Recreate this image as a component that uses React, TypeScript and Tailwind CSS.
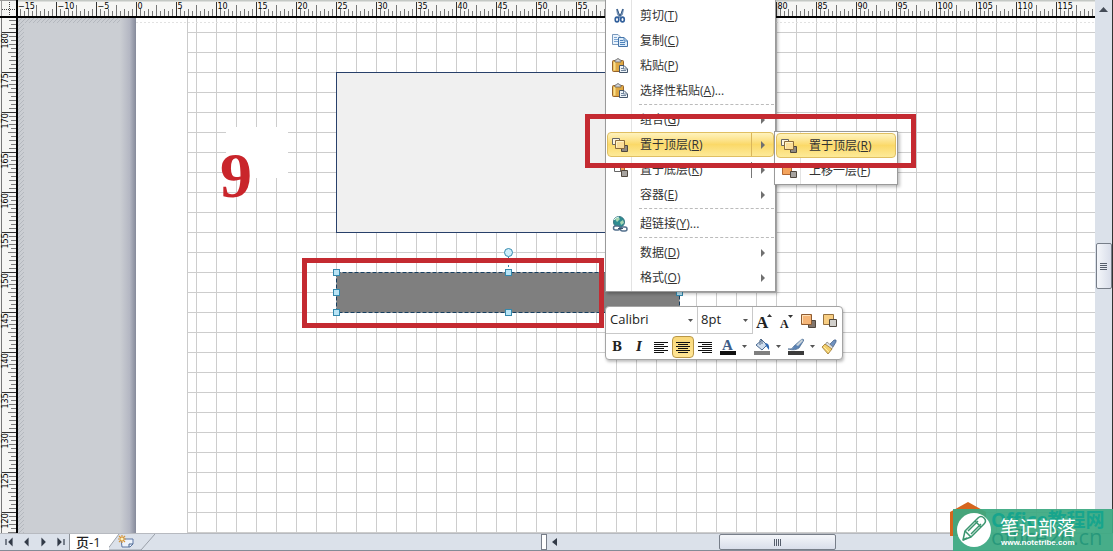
import type { ReactNode } from 'react';

const FONT = 'font-["Open_Sans","Noto_Sans_CJK_SC",sans-serif]';

function TopRuler() {
  const ticks: ReactNode[] = [];
  for (let i = 0; i <= 268; i++) {
    const x = 2.5 + i * 4;
    const k = i - 29;
    const major = ((k % 10) + 10) % 10 === 0;
    const mid = ((k % 5) + 5) % 5 === 0;
    ticks.push(<path key={i} d={`M${x} ${major ? 2 : mid ? 5 : i % 2 ? 11 : 9}V17`} stroke={major ? '#333' : '#777'} />);
    if (major) {
      ticks.push(
        <text key={'t' + i} x={x + 1} y={9} fontSize="8" fill="#000">
          {String((k / 10) * 5).replace('-', '−')}
        </text>,
      );
    }
  }
  return (
    <svg className='block h-[18px] min-w-0 flex-1 border-b-2 border-black bg-[#f6f6f4] font-["DejaVu_Sans",sans-serif]' aria-label="Horizontal ruler">
      <path d="M0 .5H1200" stroke="#c4c8c4" strokeWidth="2" />
      <text x="0" y="9" fontSize="8" fill="#000">−15</text>
      {ticks}
    </svg>
  );
}

function SideRuler() {
  const ticks: ReactNode[] = [];
  for (let i = 0; i < 130; i++) {
    const y = 2.5 + i * 4;
    const k = i - 3;
    const major = ((k % 10) + 10) % 10 === 0;
    const mid = ((k % 5) + 5) % 5 === 0;
    ticks.push(<path key={i} d={`M${major ? 2 : mid ? 8 : i % 2 ? 11 : 9} ${y}H17`} stroke={major ? '#333' : '#777'} />);
    if (major) {
      ticks.push(
        <text key={'t' + i} transform={`translate(8 ${y + 16}) rotate(-90)`} fontSize="8" fill="#000">
          {180 - (k / 10) * 5}
        </text>,
      );
    }
  }
  return (
    <svg className='block h-full w-[18px] shrink-0 border-r-2 border-black bg-[#f6f6f4] font-["DejaVu_Sans",sans-serif]' aria-label="Vertical ruler">
      <path d="M1.5 0V600" stroke="#777" />
      {ticks}
    </svg>
  );
}

function Grid() {
  return (
    <svg className="absolute inset-0 h-full w-full" aria-hidden="true">
      <defs>
        <pattern id="grid" width="20" height="20" x="18" y="13" patternUnits="userSpaceOnUse">
          <path d="M.5 0V20M0 1.5H20" stroke="#cdcdcd" />
        </pattern>
        <pattern id="hatch" width="4" height="4" patternUnits="userSpaceOnUse">
          <path d="M0 4L4 0" stroke="#aeb3b9" strokeWidth=".8" />
        </pattern>
        <linearGradient id="shade">
          <stop offset="0" stopColor="#cbced3" />
          <stop offset=".6" stopColor="#b4b7c3" />
          <stop offset="1" stopColor="#858a9a" />
        </linearGradient>
      </defs>
      <rect width="118" height="100%" fill="#cbced3" />
      <rect width="6" height="100%" fill="url(#hatch)" />
      <rect width="118" height="5" fill="url(#hatch)" />
      <rect x="102" width="16" height="100%" fill="url(#shade)" />
      <rect x="118" width="100%" height="100%" fill="#fff" />
      <rect x="169" width="100%" height="100%" fill="url(#grid)" />
      <path d="M169.500 0V600" stroke="#cbcbcb" />
      <path d="M118 4.500H1200" stroke="#e2e2e2" strokeDasharray="2 2" />
      <rect x="208" y="109" width="62" height="51" fill="#fff" />
    </svg>
  );
}

function Shapes() {
  const handles = [[318, 254], [490, 254], [661, 274], [318, 274], [318, 294], [490, 294]];
  return (
    <svg className="absolute inset-0 h-full w-full" aria-hidden="true">
      <rect x="318.500" y="54.500" width="344" height="160" fill="#f0f0f0" stroke="#28406a" />
      <rect x="318.500" y="254.500" width="343" height="40" fill="#7f7f7f" stroke="#173f60" strokeDasharray="4 2" />
      <path d="M490.500 239V252" stroke="#3489ad" strokeDasharray="2 2" />
      <circle cx="490.500" cy="234.500" r="4" fill="#cdeefb" stroke="#3489ad" />
      {handles.map(([x, y]) => (
        <rect key={`${x}-${y}`} x={x - 2.5} y={y - 2.5} width="6" height="6" fill="#b9e4f5" stroke="#3489ad" />
      ))}
    </svg>
  );
}

type IconName = 'cut' | 'copy' | 'paste' | 'front' | 'back' | 'forward' | 'link';

function Icon({ name }: { name: IconName }) {
  return (
    <svg className="h-4 w-4 shrink-0" viewBox="0 0 16 16" fill="none" aria-hidden="true">
      {name === 'cut' && (
        <>
          <path d="M5 1L6 6L9 10M11 1L10 6L6 10" stroke="#7893b5" strokeWidth="2" />
          <path d="M5 1L8 8M11 1L8 8" stroke="#345a86" />
          <ellipse cx="5" cy="11.500" rx="1.800" ry="2.400" stroke="#315f9b" strokeWidth="1.600" />
          <ellipse cx="10.500" cy="11.500" rx="1.800" ry="2.400" stroke="#315f9b" strokeWidth="1.600" />
        </>
      )}
      {name === 'copy' && (
        <>
          <path d="M.5 1.500H6L8.500 4V11.500H.5Z" fill="#eaf3fc" stroke="#7999bd" />
          <path d="M2 4.500H5M2 6.500H6M2 8.500H6" stroke="#7da6d3" />
          <path d="M6.500 4.500H12L15.500 8V13.500H6.500Z" fill="#dcecfa" stroke="#4674a8" />
          <path d="M12 4.500V8H15.500M8 7.500H11M8 9.500H13M8 11.500H13" stroke="#4d82bb" />
        </>
      )}
      {name === 'paste' && (
        <>
          <rect x=".5" y="2.500" width="11" height="11" rx="1" fill="#dfa944" stroke="#96632a" />
          <path d="M2.500 4V12.500" stroke="#fae08d" strokeWidth="2" />
          <path d="M3 4V2H4.500L5 .8H7L7.500 2H9V4Z" fill="#d8dadd" stroke="#666" strokeWidth=".8" />
          <path d="M7.500 7.500H12L15.500 11V14.500H7.500Z" fill="#edf3f8" stroke="#45566b" />
          <path d="M9 10.500H12M9 12.500H14M11.500 8V11H15" stroke="#70849c" />
        </>
      )}
      {name === 'front' && (
        <>
          <path d="M.5 1.500H7.500V7.500H.5Z" fill="#fdf6e2" stroke="#666" />
          <path d="M9.500 8.500H15.500V14.500H9.500Z" fill="#8e8982" stroke="#50483f" />
          <path d="M3.500 3.500H12.500V11.500H3.500Z" fill="#fadd98" stroke="#8a6a3c" />
          <path d="M4.500 10.500V4.500H11.500" stroke="#fff4c8" />
        </>
      )}
      {(name === 'back' || name === 'forward') && (
        <>
          <path d={name === 'back' ? 'M5.500 2.500H12.500V9.500H5.500Z' : 'M1.500 2.500H10.500V11.500H1.500Z'} fill="#f4a35c" stroke="#b16631" />
          {name === 'back' && <path d="M2.500 3.500H8.500V9.500H2.500Z" fill="#fff" stroke="#666" />}
          <path d="M9.500 8.500H15.500V14.500H9.500Z" fill="#a7a39f" stroke="#50483f" />
        </>
      )}
      {name === 'link' && (
        <>
          <circle cx="7" cy="6" r="5.500" fill="#2e8c91" stroke="#397581" />
          <path d="M3 3L6 1L8 3L5 6ZM8 6L11 4L12 7L9 9Z" fill="#a6d6b2" />
          <path d="M2 4Q4 1 7 1" stroke="#d6f4ee" />
          <rect x="1.500" y="10" width="6.500" height="4" rx="2" fill="#fff" stroke="#526f8c" strokeWidth="1.500" />
          <rect x="8.500" y="11" width="6.500" height="4" rx="2" fill="#fff" stroke="#526f8c" strokeWidth="1.500" />
          <path d="M6 12.500H11" stroke="#38546f" />
        </>
      )}
    </svg>
  );
}

interface ItemProps {
  label: string;
  hotkey: string;
  tail?: string;
  icon?: IconName;
  arrow?: boolean;
  split?: boolean;
  active?: boolean;
}

function MenuItem({ label, hotkey, tail = '', icon, arrow, split, active }: ItemProps) {
  return (
    <button
      type="button"
      role="menuitem"
      className={`flex h-[25px] w-full shrink-0 items-center rounded-sm border pl-1 text-left text-[12px] leading-4 whitespace-nowrap text-[#333] ${active ? 'border-[#e0bf62] bg-linear-to-b from-[#fff3bd] via-[#fbd968] to-[#fdea98]' : 'border-transparent'}`}
    >
      <span className="flex w-7 shrink-0">{icon && <Icon name={icon} />}</span>
      <span className="flex-1">
        {label}(<u>{hotkey}</u>){tail}
      </span>
      {arrow && (
        <span className={`flex w-[22px] items-center border-l pl-2 ${active ? 'h-full border-[#d9b65c]' : split ? 'h-4 border-[#777]' : 'h-full border-transparent'}`}>
          <svg className="h-2 w-2" viewBox="0 0 8 8" aria-hidden="true">
            <path d="M1 0L5 4L1 8Z" fill="#707070" />
          </svg>
        </span>
      )}
    </button>
  );
}

function Divider() {
  return <div className="mt-px mb-[2px] ml-8 h-0 border-t border-dashed border-[#bbb]" />;
}

function ContextMenu() {
  return (
    <div role="menu" className="absolute -top-[18px] left-[587px] w-[171px] overflow-hidden border border-t-0 border-[#9a9a9a] bg-white px-px pt-[3px] pb-px shadow-[2px_2px_3px_rgba(0,0,0,0.25)]">
      <div className="absolute inset-y-0 left-[25px] w-px bg-[#e3e3e3]" />
      <div className="relative flex flex-col">
        <MenuItem label="剪切" hotkey="T" icon="cut" />
        <MenuItem label="复制" hotkey="C" icon="copy" />
        <MenuItem label="粘贴" hotkey="P" icon="paste" />
        <MenuItem label="选择性粘贴" hotkey="A" tail="..." icon="paste" />
        <Divider />
        <MenuItem label="组合" hotkey="G" arrow />
        <MenuItem label="置于顶层" hotkey="R" icon="front" arrow active />
        <MenuItem label="置于底层" hotkey="K" icon="back" arrow split />
        <MenuItem label="容器" hotkey="E" arrow />
        <Divider />
        <MenuItem label="超链接" hotkey="Y" tail="..." icon="link" />
        <Divider />
        <MenuItem label="数据" hotkey="D" arrow />
        <MenuItem label="格式" hotkey="O" arrow />
      </div>
    </div>
  );
}

function SubMenu() {
  return (
    <div role="menu" className="absolute top-[113px] left-[756px] w-[124px] border border-[#9a9a9a] bg-white p-px shadow-[2px_2px_3px_rgba(0,0,0,0.25)]">
      <div className="absolute inset-y-0 left-[25px] w-px bg-[#e3e3e3]" />
      <div className="relative">
        <MenuItem label="置于顶层" hotkey="R" icon="front" active />
        <MenuItem label="上移一层" hotkey="F" icon="forward" />
      </div>
    </div>
  );
}

function Caret() {
  return (
    <svg className="h-[3px] w-[5px] shrink-0" viewBox="0 0 5 3" aria-hidden="true">
      <path d="M0 0H5L2.500 3Z" fill="#555" />
    </svg>
  );
}

function Lines({ d }: { d: string }) {
  return (
    <svg className="h-4 w-4" viewBox="0 0 16 16" aria-hidden="true">
      <path d={d} stroke="#111" />
    </svg>
  );
}

function MiniToolbar() {
  const btn = 'flex h-[22px] w-[22px] shrink-0 items-center justify-center';
  return (
    <div role="toolbar" aria-label="Format" className="absolute top-[288px] left-[587px] w-[238px] rounded-sm border border-[#a5a5a5] bg-white text-[#222] shadow-[1px_2px_3px_rgba(0,0,0,0.25)]">
      <div className="flex h-[27px] items-center">
        <div className="relative flex h-full w-[92px] items-center border-r border-b border-[#c9c9c9]">
          <select aria-label="Font" className="h-full w-full appearance-none bg-transparent pl-1 text-[13px]">
            <option>Calibri</option>
          </select>
          <span className="pointer-events-none absolute right-[4px]"><Caret /></span>
        </div>
        <div className="relative flex h-full w-[55px] items-center border-r border-b border-[#c9c9c9]">
          <select aria-label="Size" className="h-full w-full appearance-none bg-transparent pl-[3px] text-[13px]">
            <option>8pt</option>
          </select>
          <span className="pointer-events-none absolute right-[4px]"><Caret /></span>
        </div>
        <button type="button" aria-label="Grow font" className={btn}>
          <svg className="h-4 w-4" viewBox="0 0 16 16"><text x="0" y="15" fontSize="17" fontWeight="bold" className='font-["Liberation_Serif",serif]' fill="#222">A</text><path d="M11 4L13.500 1L16 4Z" fill="#333" /></svg>
        </button>
        <button type="button" aria-label="Shrink font" className={btn}>
          <svg className="h-4 w-4" viewBox="0 0 16 16"><text x="2" y="15" fontSize="12" fontWeight="bold" className='font-["Liberation_Serif",serif]' fill="#222">A</text><path d="M10 2L12.500 5L15 2Z" fill="#333" /></svg>
        </button>
        <button type="button" aria-label="Bring forward" className={btn}>
          <svg className="h-4 w-4" viewBox="0 0 16 16"><path d="M8.500 7.500H15.500V14.500H8.500Z" fill="#80756d" stroke="#50483f" /><path d="M1.500 1.500H11.500V11.500H1.500Z" fill="#f5b577" stroke="#8e5c32" /><path d="M2.500 10V2.500H10" fill="none" stroke="#ffe1b8" /></svg>
        </button>
        <button type="button" aria-label="Send backward" className={btn}>
          <svg className="h-4 w-4" viewBox="0 0 16 16"><path d="M1.500 1.500H11.500V11.500H1.500Z" fill="#f8ce83" stroke="#957140" /><path d="M7.500 6.500H14.500V13.500H7.500Z" fill="#d1cfcb" stroke="#50483f" /></svg>
        </button>
      </div>
      <div className="flex h-[25px] items-center">
        <button type="button" className={`${btn} font-["DejaVu_Serif",serif] text-[12px] font-bold`}>B</button>
        <button type="button" className={`${btn} font-["DejaVu_Serif",serif] text-[12px] font-bold italic`}>I</button>
        <button type="button" aria-label="Align left" className={btn}><Lines d="M1 3.500H15M1 5.500H11M1 7.500H15M1 9.500H11M1 11.500H15M1 13.500H11" /></button>
        <button type="button" aria-label="Center" className={`${btn} rounded-sm border border-[#b99747] bg-linear-to-b from-[#f9d879] to-[#ffe594]`}><Lines d="M1 3.500H15M3 5.500H13M1 7.500H15M3 9.500H13M1 11.500H15M3 13.500H13" /></button>
        <button type="button" aria-label="Align right" className={btn}><Lines d="M1 3.500H15M5 5.500H15M1 7.500H15M5 9.500H15M1 11.500H15M5 13.500H15" /></button>
        <button type="button" aria-label="Font color" className="flex h-[22px] w-[34px] items-center gap-[6px] pl-1">
          <svg className="h-[18px] w-4" viewBox="0 0 16 18"><text x="2" y="12" fontSize="15" fontWeight="bold" className='font-["Liberation_Serif",serif]' fill="#3d5d87">A</text><rect y="13" width="16" height="4" fill="#111" /></svg>
          <Caret />
        </button>
        <button type="button" aria-label="Fill" className="flex h-[22px] w-[34px] items-center gap-[6px] pl-1">
          <svg className="h-[18px] w-4" viewBox="0 0 16 18"><path d="M2 7L8 2L13 7L8 12Z" fill="#cfdded" stroke="#4d6c92" /><path d="M6 7V2Q7 0 8 2V6" fill="none" stroke="#526a88" /><path d="M11 5Q16 5 15 12L12 8Z" fill="#2d67b0" /><rect y="13" width="16" height="4" fill="#7f7f7f" /></svg>
          <Caret />
        </button>
        <button type="button" aria-label="Line" className="flex h-[22px] w-[34px] items-center gap-[6px] pl-1">
          <svg className="h-[18px] w-4" viewBox="0 0 16 18"><path d="M0 11Q4 12 6 8L14 1L16 2L11 10Q7 13 0 11Z" fill="#5b83b4" stroke="#48698e" strokeWidth=".7" /><path d="M8 7L14 1L15 3L10 8Z" fill="#c8d2d9" /><rect y="13" width="16" height="4" fill="#3b3b3b" /></svg>
          <Caret />
        </button>
        <button type="button" aria-label="Format painter" className={btn}>
          <svg className="h-4 w-4" viewBox="0 0 16 16"><path d="M9 5L13 1Q16 0 15 3L12 8Z" fill="#6f91bd" stroke="#435f86" strokeWidth=".7" /><path d="M6 3L12 8L10 11L4 6Z" fill="#dfe3e7" stroke="#777" strokeWidth=".7" /><path d="M4 5L11 10L7 15L1 8Z" fill="#f2cf6d" stroke="#9a752e" strokeWidth=".8" /><path d="M3 8L8 13" stroke="#ffefa9" /></svg>
        </button>
      </div>
    </div>
  );
}

function Watermark() {
  return (
    <div className="absolute right-0 bottom-0 h-[53px] w-[166px] overflow-hidden">
      <svg className="absolute inset-0 h-full w-full" viewBox="0 0 166 53" aria-hidden="true">
        <path d="M3 14L21 4L39 14V38H3Z" fill="#d5651e" />
        <rect x="6" y="11" width="160" height="42" fill="#3ba981" fillOpacity=".93" />
        <g className='font-["Open_Sans","Noto_Sans_CJK_SC",sans-serif]'>
          <text x="44" y="29" fontSize="19" fontWeight="700" fill="#17a58d">Office教程网</text>
          <text x="44" y="47" fontSize="22" fill="#188f75" fillOpacity=".7">office26.cn</text>
        </g>
        <circle cx="27" cy="32" r="17" fill="#fff" />
        <g fill="none" stroke="#3a956f" strokeWidth="1.500" strokeLinejoin="round">
          <path d="M16 42L18 33L31 20Q34 17 37 20Q40 23 37 26L24 39Z" />
          <path d="M18 33L24 39M28 23L34 29M21 33L31 23M24 36L34 26M16 42L20 40" />
        </g>
        <g fill="#fff">
          <text x="53" y="37" fontSize="19" className='font-["Noto_Sans_CJK_SC",sans-serif]'>笔记部落</text>
          <text x="54" y="47" fontSize="8" fontWeight="bold" className='font-["Liberation_Sans",sans-serif]'>www.notetribe.com</text>
        </g>
      </svg>
    </div>
  );
}

function BottomBar() {
  const arrows: [string, string][] = [
    ['First page', 'M3 4V10M9 4L6 7L9 10Z'],
    ['Previous page', 'M8 4L5 7L8 10Z'],
    ['Next page', 'M5 4L8 7L5 10Z'],
    ['Last page', 'M4 4L7 7L4 10ZM10 4V10'],
  ];
  return (
    <footer className="flex h-[18px] shrink-0 items-stretch border-t border-b border-t-[#b7bac0] border-b-[#858b96] bg-[#dbe1ea]">
      <div className="flex w-[547px] shrink-0 items-stretch">
        <nav className="flex w-[69px] items-center pl-[2px]" aria-label="Pages">
          {arrows.map(([label, d]) => (
            <button key={label} type="button" aria-label={label} className="flex w-[17px] justify-center">
              <svg className="h-[14px] w-[14px]" viewBox="0 0 14 14"><path d={d} fill="#333b48" stroke="#333b48" strokeWidth="1.200" /></svg>
            </button>
          ))}
        </nav>
        <button type="button" className="flex w-[40px] items-center border-l border-[#8d9299] bg-white pl-[6px] text-[13px] leading-4 font-medium whitespace-nowrap text-[#222]">页-1</button>
        <button type="button" aria-label="Insert page" className="flex">
          <svg className="h-4 w-[46px]" viewBox="0 0 46 16"><path d="M0 0H10L0 14Z" fill="#fff" /><path d="M10 0L-2 16H32L46 0" fill="none" stroke="#999fa8" /><path d="M12 5H24V10L21 13H13Z" fill="#edf3fc" stroke="#5c77a3" /><path d="M20 13V10H24" fill="none" stroke="#47648f" /><path d="M13 1V9M9 5H17M10 2L16 8M16 2L10 8" stroke="#d79639" strokeWidth="1.200" /><circle cx="13" cy="5" r="1.500" fill="#fff3bb" /></svg>
        </button>
        <div className="ml-auto w-[6px] border border-[#777e89] bg-white" />
      </div>
      <div className="flex min-w-0 flex-1 items-center">
        <button type="button" aria-label="Scroll left" className="ml-[5px] h-[10px] w-[6px]"><svg className="h-full w-full" viewBox="0 0 6 10"><path d="M5 1L0 5L5 9Z" fill="#333b48" /></svg></button>
        <div className="flex h-full flex-1">
          <div className="w-[29%]" />
          <div className="flex h-4 w-[117px] items-center justify-center gap-px rounded-xs border border-[#777e89] bg-linear-to-b from-[#f4f6fa] to-[#d9deea]">
            {[0, 1, 2, 3].map((n) => <span key={n} className="h-[7px] w-px bg-[#555d6b]" />)}
          </div>
        </div>
      </div>
    </footer>
  );
}

export default function App() {
  return (
    <div className={`relative flex h-screen min-h-[300px] flex-col overflow-hidden bg-white ${FONT}`}>
      <div className="flex min-h-0 flex-1">
        <main className="flex min-w-0 flex-1 flex-col">
          <div className="flex shrink-0">
            <svg className="h-[18px] w-[18px] shrink-0 border-r-2 border-b-2 border-black bg-[#f6f6f4]" aria-hidden="true">
              <path d="M0 .5H18M1.500 0V18" stroke="#999" />
              <path d="M9.500 2V16M2 9.500H16" stroke="#444" strokeDasharray="1 1" />
            </svg>
            <TopRuler />
          </div>
          <div className="flex min-h-0 flex-1">
            <SideRuler />
            <section className="relative min-w-0 flex-1" aria-label="Drawing page">
              <Grid />
              <Shapes />
              <span className='absolute top-[126px] left-[202px] font-["Liberation_Serif",serif] text-[64px] leading-[64px] font-bold text-[#c9252b]'>9</span>
              <ContextMenu />
              <SubMenu />
              <MiniToolbar />
              <div className="pointer-events-none absolute top-[240px] left-[284px] h-[70px] w-[302px] border-[5px] border-[#c42a31]" />
              <div className="pointer-events-none absolute top-[96px] left-[567px] h-[54px] w-[331px] border-[5px] border-[#c42a31]" />
            </section>
          </div>
        </main>
        <aside className="flex w-[18px] shrink-0 flex-col items-center border-r border-[#333] bg-[#dbe1ea] pt-[7px]">
          <button type="button" aria-label="Scroll up" className="h-[5px] w-[9px]"><svg className="h-full w-full" viewBox="0 0 9 5"><path d="M4.500 0L9 5H0Z" fill="#444b57" /></svg></button>
          <div className="h-[44%] shrink-0" />
          <div className="flex h-[46px] w-4 flex-col items-center justify-center gap-px rounded-xs border border-[#777e89] bg-linear-to-r from-[#f4f6fa] to-[#d9deea]">
            {[0, 1, 2, 3].map((n) => <span key={n} className="h-px w-[7px] bg-[#555d6b]" />)}
          </div>
        </aside>
      </div>
      <BottomBar />
      <Watermark />
    </div>
  );
}
